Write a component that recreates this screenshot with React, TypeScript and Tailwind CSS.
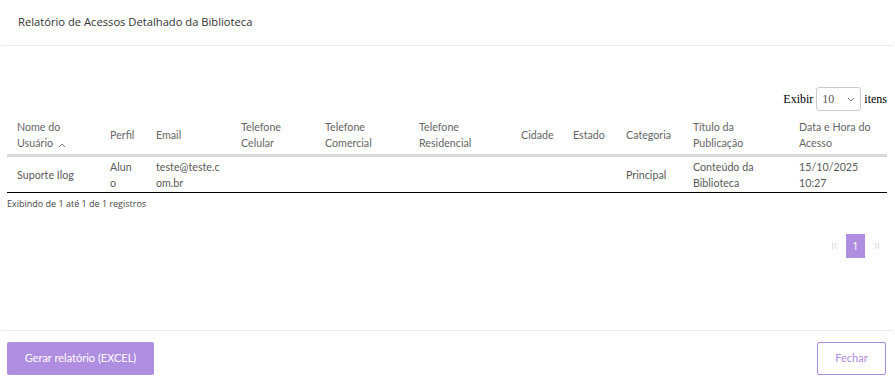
const cols = [93, 46, 85, 84, 94, 102, 52, 53, 67, 106, 98];

const headers: React.ReactNode[] = [
  <>
    Nome do Usuário{" "}
    <svg width="8" height="6" viewBox="0 0 8 6" className="inline ml-0.5 align-middle">
      <path d="M1 5 L4 2 L7 5" fill="none" stroke="#777" strokeWidth="1" />
    </svg>
  </>,
  "Perfil",
  "Email",
  "Telefone Celular",
  "Telefone Comercial",
  "Telefone Residencial",
  "Cidade",
  "Estado",
  "Categoria",
  "Título da Publicação",
  "Data e Hora do Acesso",
];

const row = [
  "Suporte Ilog",
  "Aluno",
  "teste@teste.com.br",
  "",
  "",
  "",
  "",
  "",
  "Principal",
  "Conteúdo da Biblioteca",
  "15/10/2025 10:27",
];

export default function App() {
  return (
    <div className="w-[895px] h-[387px] bg-white flex flex-col font-['Open_Sans',sans-serif] text-[#333]">
      <div className="mx-[2px] h-[46px] border-b border-[#ececec] flex items-center pl-[16px] text-[11.2px] text-[#333]">
        Relatório de Acessos Detalhado da Biblioteca
      </div>

      <div className="flex-1 px-[7px] pt-[41px]">
        <div className="flex justify-end items-center pr-[1px] font-['Liberation_Serif',serif] text-[12px] text-black">
          <span>Exibir</span>
          <div className="ml-[3px] mr-[3px] w-[45px] h-[24px] border border-[#ccc] rounded-[3px] flex items-center justify-between px-[5px] text-[#555]">
            <span>10</span>
            <svg width="8" height="5" viewBox="0 0 8 5">
              <path d="M1 1 L4 4 L7 1" fill="none" stroke="#777" strokeWidth="1" />
            </svg>
          </div>
          <span>itens</span>
        </div>

        <table className="table-fixed w-[880px] mt-[6px] border-collapse font-['Lato',sans-serif] text-[10.7px] leading-[16px] text-[#666]">
          <colgroup>
            {cols.map((w, i) => (
              <col key={i} style={{ width: w }} />
            ))}
          </colgroup>
          <thead>
            <tr className="border-b-[3px] border-[#d6d6d6]">
              {headers.map((h, i) => (
                <th key={i} className="text-left font-normal px-[10px] pt-[2px] pb-[2px] h-[38px] align-middle">
                  {h}
                </th>
              ))}
            </tr>
          </thead>
          <tbody>
            <tr className="border-b-[1.5px] border-black">
              {row.map((c, i) => (
                <td key={i} className="px-[10px] pt-[1px] h-[37px] align-middle [overflow-wrap:anywhere] text-[#5a5a5a]">
                  {c}
                </td>
              ))}
            </tr>
          </tbody>
        </table>

        <div className="mt-[4px] text-[9px] text-[#444]">Exibindo de 1 até 1 de 1 registros</div>

        <div className="flex justify-end items-center mt-[24px] pr-[8px] gap-[6px]">
          <svg width="8" height="8" viewBox="0 0 8 8" className="mr-[1px]">
            <path d="M1.5 1 V7 M6 1 L3 4 L6 7" fill="none" stroke="#ddd" strokeWidth="1" />
          </svg>
          <div className="w-[19px] h-[24px] bg-[#af8de0] text-white text-[11px] flex items-center justify-center">1</div>
          <svg width="8" height="8" viewBox="0 0 8 8" className="ml-[1px]">
            <path d="M6.5 1 V7 M2 1 L5 4 L2 7" fill="none" stroke="#ddd" strokeWidth="1" />
          </svg>
        </div>
      </div>

      <div className="mx-[2px] border-t border-[#ececec] h-[57px] flex items-center justify-between px-[5px] pb-[2px] font-['Lato',sans-serif]">
        <button className="w-[147px] h-[33px] bg-[#af8de0] text-white text-[11px] rounded-[2px]">
          Gerar relatório (EXCEL)
        </button>
        <button className="w-[69px] h-[33px] mr-[2px] border border-[#af8de0] text-[#af8de0] text-[11px] rounded-[2px]">
          Fechar
        </button>
      </div>
    </div>
  );
}
